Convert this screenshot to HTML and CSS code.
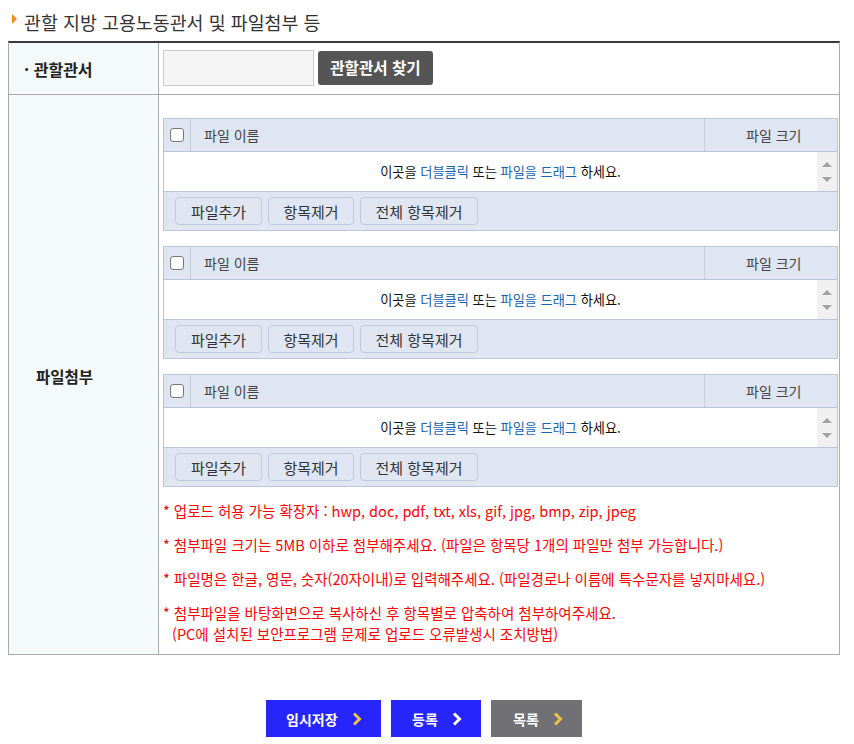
FILE: index.html
```html
<!DOCTYPE html>
<html lang="ko">
<head>
<meta charset="utf-8">
<title>관할 지방 고용노동관서 및 파일첨부 등</title>
<link rel="stylesheet" href="styles.css">
</head>
<body>
<div class="page">
  <h2 class="title"><span class="tri"></span>관할 지방 고용노동관서 및 파일첨부 등</h2>
  <div class="form">
    <div class="lbl lbl-office">· 관할관서</div>
    <div class="cell cell-office">
      <span class="office-input"></span>
      <button class="btn-find" type="button">관할관서 찾기</button>
    </div>
    <div class="lbl lbl-file">파일첨부</div>
    <div class="cell cell-file">
      <div class="fbox">
        <div class="fh"><div class="fh-check"><span class="chk"></span></div><div class="fh-name">파일 이름</div><div class="fh-size">파일 크기</div></div>
        <div class="fb"><div class="fb-text">이곳을 <span class="hl">더블클릭</span> 또는 <span class="hl">파일을 드래그</span> 하세요.</div><div class="sb"><span class="arr-up"></span><span class="arr-down"></span></div></div>
        <div class="ff"><button class="fbtn b1" type="button">파일추가</button><button class="fbtn b2" type="button">항목제거</button><button class="fbtn b3" type="button">전체 항목제거</button></div>
      </div>
      <div class="fbox">
        <div class="fh"><div class="fh-check"><span class="chk"></span></div><div class="fh-name">파일 이름</div><div class="fh-size">파일 크기</div></div>
        <div class="fb"><div class="fb-text">이곳을 <span class="hl">더블클릭</span> 또는 <span class="hl">파일을 드래그</span> 하세요.</div><div class="sb"><span class="arr-up"></span><span class="arr-down"></span></div></div>
        <div class="ff"><button class="fbtn b1" type="button">파일추가</button><button class="fbtn b2" type="button">항목제거</button><button class="fbtn b3" type="button">전체 항목제거</button></div>
      </div>
      <div class="fbox">
        <div class="fh"><div class="fh-check"><span class="chk"></span></div><div class="fh-name">파일 이름</div><div class="fh-size">파일 크기</div></div>
        <div class="fb"><div class="fb-text">이곳을 <span class="hl">더블클릭</span> 또는 <span class="hl">파일을 드래그</span> 하세요.</div><div class="sb"><span class="arr-up"></span><span class="arr-down"></span></div></div>
        <div class="ff"><button class="fbtn b1" type="button">파일추가</button><button class="fbtn b2" type="button">항목제거</button><button class="fbtn b3" type="button">전체 항목제거</button></div>
      </div>
      <div class="notes">
        <p>* 업로드 허용 가능 확장자 : hwp, doc, pdf, txt, xls, gif, jpg, bmp, zip, jpeg</p>
        <p>* 첨부파일 크기는 5MB 이하로 첨부해주세요. (파일은 항목당 1개의 파일만 첨부 가능합니다.)</p>
        <p>* 파일명은 한글, 영문, 숫자(20자이내)로 입력해주세요. (파일경로나 이름에 특수문자를 넣지마세요.)</p>
        <p>* 첨부파일을 바탕화면으로 복사하신 후 항목별로 압축하여 첨부하여주세요.<br>(PC에 설치된 보안프로그램 문제로 업로드 오류발생시 조치방법)</p>
      </div>
    </div>
  </div>
  <div class="actions">
    <button class="act act-blue act-temp" type="button">임시저장<svg class="chev" viewBox="0 0 10 14"><path d="M2 1.5 L7.5 7 L2 12.5" fill="none" stroke="#ecc247" stroke-width="3"/></svg></button>
    <button class="act act-blue act-reg" type="button">등록<svg class="chev" viewBox="0 0 10 14"><path d="M2 1.5 L7.5 7 L2 12.5" fill="none" stroke="#ffffff" stroke-width="3"/></svg></button>
    <button class="act act-gray act-list" type="button">목록<svg class="chev" viewBox="0 0 10 14"><path d="M2 1.5 L7.5 7 L2 12.5" fill="none" stroke="#ecc247" stroke-width="3"/></svg></button>
  </div>
</div>
</body>
</html>
```

FILE: styles.css
```css
* { box-sizing: border-box; }
body {
  margin: 0;
  font-family: "Noto Sans CJK KR", "Noto Sans", sans-serif;
  color: #222;
  background: #fff;
}
button { font-family: inherit; cursor: pointer; }
.page { width: 854px; padding: 0 14px 0 8px; }

.title {
  margin: 0;
  height: 41px;
  display: flex;
  align-items: center;
  padding: 4px 0 0 4px;
  font-size: 18.4px;
  font-weight: normal;
  color: #333;
  line-height: 1;
}
.tri {
  width: 0; height: 0;
  border-top: 5px solid transparent;
  border-bottom: 5px solid transparent;
  border-left: 5px solid #f08c1e;
  margin: -7px 7px 0 0;
}

.form {
  display: grid;
  grid-template-columns: 150px 1fr;
  border-top: 2px solid #3a3a3a;
  border-left: 1px solid #aaa;
  border-right: 1px solid #aaa;
  border-bottom: 1px solid #aaa;
}
.lbl {
  background: #f4f9fa;
  border-right: 1px solid #aaa;
  display: flex;
  align-items: center;
  font-size: 16px;
  font-weight: bold;
  color: #222;
}
.lbl-office { padding-left: 15px; border-bottom: 1px solid #aaa; height: 52px; }
.lbl-file { padding-left: 27px; padding-top: 2px; font-weight: 600; font-size: 15.5px; }
.cell-office {
  border-bottom: 1px solid #aaa;
  height: 52px;
  display: flex;
  align-items: flex-start;
  padding: 7px 0 0 4px;
  gap: 4px;
}
.office-input {
  display: block;
  width: 151px; height: 36px;
  background: #f5f5f5;
  border: 1px solid #ccc;
}
.btn-find {
  margin-top: 1px;
  width: 115px; height: 34px;
  background: #555;
  border: 0;
  border-radius: 3px;
  color: #fff;
  font-size: 15.6px;
  font-weight: bold;
  padding: 0;
  line-height: 1;
}

.cell-file { padding: 23px 1px 10px 4px; }
.fbox {
  border: 1px solid #b9c5d8;
  margin-bottom: 15px;
}
.fbox:nth-child(3) { margin-bottom: 13px; }
.fh {
  display: flex;
  height: 33px;
  background: #dfe6f1;
  border-bottom: 1px solid #b9c5d8;
  font-size: 14px;
  color: #444;
  line-height: 1;
}
.fh-check {
  width: 27px;
  border-right: 1px solid #c3cddb;
  display: flex;
  align-items: center;
  justify-content: center;
  padding-right: 1px;
}
.chk {
  display: block;
  width: 14px; height: 14px;
  border: 1.3px solid #777;
  border-radius: 3px;
  background: #fff;
}
.fh-name { flex: 1; display: flex; align-items: center; padding-left: 13px; }
.fh-size {
  width: 133px;
  border-left: 1px solid #c3cddb;
  display: flex; align-items: center;
  padding-left: 41px;
}
.fb {
  display: flex;
  height: 40px;
  background: #fff;
  border-bottom: 1px solid #b9c5d8;
}
.fb-text {
  flex: 1;
  padding-left: 20px;
  display: flex; align-items: center; justify-content: center;
  font-size: 13.2px;
  color: #111;
  white-space: pre;
}
.hl { color: #1a62b4; }
.sb {
  width: 20px;
  background: #f0f0f0;
  display: flex; flex-direction: column; align-items: center; justify-content: center;
  gap: 10px;
}
.arr-up, .arr-down {
  width: 0; height: 0;
  border-left: 5px solid transparent;
  border-right: 5px solid transparent;
}
.arr-up { border-bottom: 5px solid #a3a3a3; }
.arr-down { border-top: 5px solid #a3a3a3; }
.ff {
  height: 38px;
  background: #dfe6f1;
  display: flex;
  align-items: flex-start;
  padding: 5px 0 0 11px;
  gap: 6px;
}
.fbtn {
  height: 28px;
  background: #dfe6f1;
  border: 1px solid #c0cadb;
  border-radius: 4px;
  font-size: 15px;
  color: #333;
  padding: 0;
  line-height: 1;
}
.b1 { width: 87px; }
.b2 { width: 86px; }
.b3 { width: 118px; }

.notes { color: #ff0000; font-size: 14.5px; line-height: 21px; }
.notes p { margin: 0 0 13px; padding-left: 9px; text-indent: -9px; }
.notes p:last-child { margin-bottom: 0; }

.actions {
  display: flex;
  justify-content: center;
  gap: 10px;
  padding: 45px 0 0 0;
}
.act {
  height: 37px;
  border: 0;
  color: #fff;
  font-size: 14px;
  font-weight: bold;
  display: flex; align-items: center;
  padding: 0 0 0 20px;
  line-height: 1;
}
.act-blue { background: #2626fb; }
.act-gray { background: #707075; }
.act-temp { width: 115px; }
.act-reg { width: 90px; padding-left: 21px; }
.act-list { width: 91px; padding-left: 22px; }
.chev { width: 10px; height: 14px; margin-left: 14px; }
```
